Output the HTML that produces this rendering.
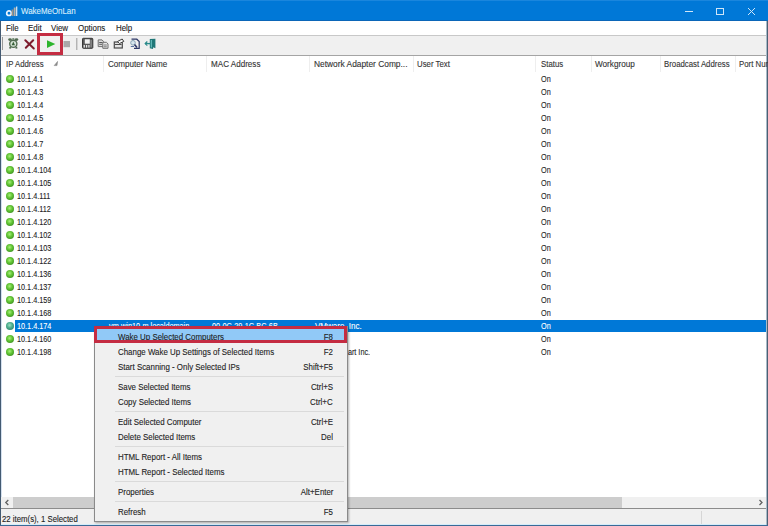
<!DOCTYPE html>
<html><head><meta charset="utf-8">
<style>
*{margin:0;padding:0;box-sizing:border-box}
html,body{width:768px;height:526px;overflow:hidden;background:#fff;font-family:"Liberation Sans",sans-serif;color:#1a1a1a}
.abs{position:absolute}
span{-webkit-text-stroke:0.12px currentColor}
#title{position:absolute;left:0;top:0;width:768px;height:21px;background:#0078d7;border-top:1px solid #1a86dd;border-bottom:1px solid #0b66b8}
#title .tt{position:absolute;left:20.5px;top:5.2px;font-size:8.6px;color:#d8ecfb;white-space:nowrap;transform-origin:0 0;transform:scaleX(.92)}
#bl{position:absolute;left:0;top:21px;width:1px;height:505px;background:#435a72}
#bl2{position:absolute;left:1px;top:56px;width:1px;height:441px;background:#d4e0ee}
#br{position:absolute;left:767px;top:21px;width:1px;height:505px;background:#4b6073}
#br2{position:absolute;left:766px;top:21px;width:1px;height:505px;background:#a9bac8}
#bb{position:absolute;left:0;top:525px;width:768px;height:1px;background:#3a6a96}
#bb2{position:absolute;left:1px;top:524px;width:765px;height:1px;background:#d4ecfa}
#menubar{position:absolute;left:1px;top:21px;width:765px;height:15px;background:#fff;border-bottom:1px solid #c8c8c8}
.mi{position:absolute;top:2px;font-size:9.3px;white-space:nowrap;transform-origin:0 0;transform:scaleX(.85)}
#toolbar{position:absolute;left:1px;top:36px;width:765px;height:20px;background:#f0f0f0;border-bottom:1px solid #a4a4a4}
#header{position:absolute;left:1px;top:56px;width:765px;height:17px;background:#fff}
.h{position:absolute;top:3px;font-size:9.3px;color:#333;white-space:nowrap;transform-origin:0 0;transform:scaleX(.84)}
.hs{position:absolute;top:0;width:1px;height:16px;background:#eeeeee}
.row{position:absolute;left:1px;width:765px;height:13px}
.row.sel{height:12px}
.selbg{position:absolute;left:14px;top:0;width:751px;height:12px;background:#0078d7}
.row .t{position:absolute;top:-0.5px;font-size:9.9px;white-space:nowrap;transform-origin:0 0;transform:scaleX(.735);color:#1e1e1e}
.row.sel .t{color:#fff}
.ball{position:absolute;left:5px;top:2px;width:8px;height:8px;border-radius:50%;background:radial-gradient(circle at 45% 40%,#a8ef7c 0,#62c534 40%,#2e7d1c 95%)}
.row.sel .ball{background:radial-gradient(circle at 45% 40%,#9fe0c0 0,#4fb08f 40%,#2a7a66 90%)}
#hscroll{position:absolute;left:1px;top:497px;width:765px;height:11px;background:#f0f0f0}
#thumb{position:absolute;left:12px;top:0;width:609px;height:11px;background:#cdcdcd}
#status{position:absolute;left:1px;top:508px;width:765px;height:16px;background:#f0f0f0;border-top:1px solid #8c8c8c}
#status .st{position:absolute;left:1px;top:4px;font-size:9.8px;white-space:nowrap;transform-origin:0 0;transform:scaleX(.795);color:#222}
#menu{position:absolute;left:94px;top:326px;width:254px;height:196px;background:#f0f0f0;border:1px solid #8a8a8a;box-shadow:1px 1px 2px rgba(0,0,0,.3)}
.ml{position:absolute;left:118px;font-size:9.3px;white-space:nowrap;transform-origin:0 0;transform:scaleX(.85);color:#1e1e1e}
.mr{position:absolute;right:435px;font-size:9.3px;white-space:nowrap;transform-origin:100% 0;transform:scaleX(.85);color:#1e1e1e}
#redmenu{position:absolute;left:94px;top:326px;width:253px;height:17px;border:3px solid #c42c42}
#redtool{position:absolute;left:37px;top:33px;width:26px;height:22px;border:3px solid #c42c42}
</style></head><body>
<div id="title">
  <svg class="abs" style="left:5px;top:4px" width="13" height="13" viewBox="0 0 13 13">
    <circle cx="4" cy="8.2" r="2.3" fill="none" stroke="#e8f4ff" stroke-width="1.7"/>
    <rect x="6.6" y="4.5" width="1.8" height="6.5" fill="#9a9288"/>
    <rect x="8.8" y="2.5" width="1.8" height="8.5" fill="#b8b0a4"/>
    <rect x="11.1" y="1.5" width="1.2" height="9.5" fill="#e4eef5"/>
  </svg>
  <span class="tt">WakeMeOnLan</span>
  <div class="abs" style="left:685px;top:10px;width:8px;height:1px;background:#cfe6f8"></div>
  <div class="abs" style="left:716px;top:7px;width:8px;height:7px;border:1px solid #cfe6f8"></div>
  <svg class="abs" style="left:747px;top:6px" width="9" height="9" viewBox="0 0 9 9"><path d="M1 1L8 8M8 1L1 8" stroke="#cfe6f8" stroke-width="1"/></svg>
</div>
<div id="bl"></div><div id="bl2"></div><div id="br"></div><div id="br2"></div><div id="bb"></div><div id="bb2"></div>
<div id="menubar">
  <span class="mi" style="left:5px">File</span>
  <span class="mi" style="left:27px">Edit</span>
  <span class="mi" style="left:50px">View</span>
  <span class="mi" style="left:77px">Options</span>
  <span class="mi" style="left:115px">Help</span>
</div>
<div id="toolbar"></div>
<svg class="abs" style="left:0;top:35px" width="160" height="20" viewBox="0 0 160 20">
  <rect x="2" y="2" width="1" height="13" fill="#9a9a9a"/>
  <g>
    <circle cx="13.3" cy="8.8" r="4.3" fill="#4f6a4f"/>
    <ellipse cx="10" cy="4.6" rx="1.8" ry="1.4" fill="#4f6a4f"/>
    <ellipse cx="16.5" cy="4.6" rx="1.8" ry="1.4" fill="#4f6a4f"/>
    <rect x="12.3" y="3.2" width="2" height="1.5" fill="#5d7a5d"/>
    <rect x="9.3" y="11.8" width="1.8" height="1.8" fill="#4f6a4f"/>
    <rect x="15.5" y="11.8" width="1.8" height="1.8" fill="#4f6a4f"/>
    <circle cx="13.3" cy="8.8" r="2.9" fill="#d6e4d6"/>
    <path d="M13.3 6.6L15 10.2H11.6Z" fill="#365f36"/>
  </g>
  <path d="M25.3 5.3L33.8 13.5M33.2 5.2L25.8 12.8" stroke="#7d1b2c" stroke-width="2" stroke-linecap="round"/>
  <path d="M47 5.2L55.3 9L47 13Z" fill="#2db52d"/>
  <rect x="63.5" y="6" width="6.5" height="6.2" fill="#a9a9a9"/>
  <rect x="76.3" y="3" width="1" height="12" fill="#9a9a9a"/>
  <rect x="82.5" y="3.3" width="10.3" height="10" rx="0.8" fill="#5a5a5a" stroke="#383838" stroke-width="1"/>
  <rect x="84.8" y="4.3" width="5" height="4.4" fill="#f4f4f4"/>
  <rect x="83.6" y="10" width="1.3" height="2.6" fill="#e8e8e8"/>
  <rect x="86" y="10" width="1.2" height="2.6" fill="#e8e8e8"/>
  <rect x="88.3" y="10" width="1.2" height="2.6" fill="#e8e8e8"/>
  <rect x="90.6" y="5" width="1" height="7.4" fill="#a0a0a0"/>
  <path d="M98.2 4.9H102L103.4 6.3V11.6H98.2Z" fill="#dcdcdc" stroke="#6e6e6e" stroke-width="1"/>
  <path d="M99.2 7.5H102.6M99.2 9.3H102" stroke="#5a5a5a" stroke-width="1"/>
  <path d="M102.8 7.3H106.4L108 8.9V13.3H102.8Z" fill="#e6e6e6" stroke="#6e6e6e" stroke-width="1"/>
  <path d="M103.8 10H106.8M103.8 11.8H106.8" stroke="#7a7a7a" stroke-width="1"/>
  <rect x="114.3" y="7" width="8" height="6" fill="#e2e2e2" stroke="#4a4a4a" stroke-width="1.2"/>
  <path d="M115 9.5H121.5" stroke="#4a4a4a" stroke-width="1"/>
  <path d="M117.5 6.5L122.2 4L123.8 6.4L119.5 8.5Z" fill="#f5f5f5" stroke="#3e3e3e" stroke-width="1"/>
  <path d="M131.5 4.2H136.8L139.2 6.5V13.4H134" fill="none" stroke="#2c3766" stroke-width="1.2"/>
  <circle cx="133" cy="7.8" r="2.3" fill="#d7e6ef" stroke="#8aa4b4" stroke-width="1"/>
  <path d="M134.5 9.5L137 12.6" stroke="#2c3766" stroke-width="1.6"/>
  <path d="M130.8 11.5H134" stroke="#5670a0" stroke-width="1"/>
  <path d="M149.8 4L155.4 3.8V13.2L153.2 12.2L153 14L149.8 13.2Z" fill="#1f7777"/>
  <path d="M145 8.6H150.5" stroke="#2a8a8a" stroke-width="1.4"/>
  <path d="M147.3 6.5L145.2 8.6L147.3 10.7" fill="none" stroke="#2a8a8a" stroke-width="1.2"/>
  <rect x="150.8" y="5" width="1" height="7.5" fill="#6fc6c6"/>
</svg>
<div id="header">
  <span class="h" style="left:5px">IP Address</span>
  <svg class="abs" style="left:51px;top:4px" width="8" height="8" viewBox="0 0 8 8"><path d="M5.6 1.4L2.2 5.6L5 5.6Z" fill="#8a8a8a" stroke="#8a8a8a" stroke-width="0.6"/></svg>
  <div class="hs" style="left:102px"></div>
  <span class="h" style="left:107px;transform:scaleX(.87)">Computer Name</span>
  <div class="hs" style="left:205px"></div>
  <span class="h" style="left:210px;transform:scaleX(.87)">MAC Address</span>
  <div class="hs" style="left:308px"></div>
  <span class="h" style="left:313px;transform:scaleX(.9)">Network Adapter Comp...</span>
  <div class="hs" style="left:412px"></div>
  <span class="h" style="left:416px">User Text</span>
  <div class="hs" style="left:534px"></div>
  <span class="h" style="left:540px">Status</span>
  <div class="hs" style="left:590px"></div>
  <span class="h" style="left:594px;transform:scaleX(.88)">Workgroup</span>
  <div class="hs" style="left:659px"></div>
  <span class="h" style="left:663px">Broadcast Address</span>
  <div class="hs" style="left:734px"></div>
  <span class="h" style="left:738px">Port Number</span>
</div>
<div class="row" style="top:73px"><i class="ball"></i><span class="t" style="left:16px">10.1.4.1</span><span class="t" style="left:540px">On</span></div>
<div class="row" style="top:86px"><i class="ball"></i><span class="t" style="left:16px">10.1.4.3</span><span class="t" style="left:540px">On</span></div>
<div class="row" style="top:99px"><i class="ball"></i><span class="t" style="left:16px">10.1.4.4</span><span class="t" style="left:540px">On</span></div>
<div class="row" style="top:112px"><i class="ball"></i><span class="t" style="left:16px">10.1.4.5</span><span class="t" style="left:540px">On</span></div>
<div class="row" style="top:125px"><i class="ball"></i><span class="t" style="left:16px">10.1.4.6</span><span class="t" style="left:540px">On</span></div>
<div class="row" style="top:138px"><i class="ball"></i><span class="t" style="left:16px">10.1.4.7</span><span class="t" style="left:540px">On</span></div>
<div class="row" style="top:151px"><i class="ball"></i><span class="t" style="left:16px">10.1.4.8</span><span class="t" style="left:540px">On</span></div>
<div class="row" style="top:164px"><i class="ball"></i><span class="t" style="left:16px">10.1.4.104</span><span class="t" style="left:540px">On</span></div>
<div class="row" style="top:177px"><i class="ball"></i><span class="t" style="left:16px">10.1.4.105</span><span class="t" style="left:540px">On</span></div>
<div class="row" style="top:190px"><i class="ball"></i><span class="t" style="left:16px">10.1.4.111</span><span class="t" style="left:540px">On</span></div>
<div class="row" style="top:203px"><i class="ball"></i><span class="t" style="left:16px">10.1.4.112</span><span class="t" style="left:540px">On</span></div>
<div class="row" style="top:216px"><i class="ball"></i><span class="t" style="left:16px">10.1.4.120</span><span class="t" style="left:540px">On</span></div>
<div class="row" style="top:229px"><i class="ball"></i><span class="t" style="left:16px">10.1.4.102</span><span class="t" style="left:540px">On</span></div>
<div class="row" style="top:242px"><i class="ball"></i><span class="t" style="left:16px">10.1.4.103</span><span class="t" style="left:540px">On</span></div>
<div class="row" style="top:255px"><i class="ball"></i><span class="t" style="left:16px">10.1.4.122</span><span class="t" style="left:540px">On</span></div>
<div class="row" style="top:268px"><i class="ball"></i><span class="t" style="left:16px">10.1.4.136</span><span class="t" style="left:540px">On</span></div>
<div class="row" style="top:281px"><i class="ball"></i><span class="t" style="left:16px">10.1.4.137</span><span class="t" style="left:540px">On</span></div>
<div class="row" style="top:294px"><i class="ball"></i><span class="t" style="left:16px">10.1.4.159</span><span class="t" style="left:540px">On</span></div>
<div class="row" style="top:307px"><i class="ball"></i><span class="t" style="left:16px">10.1.4.168</span><span class="t" style="left:540px">On</span></div>
<div class="row sel" style="top:320px"><i class="selbg"></i><i class="ball"></i><span class="t" style="left:16px">10.1.4.174</span><span class="t" style="left:108px">vm-win10-m.localdomain</span><span class="t" style="left:211px">00-0C-29-1C-BC-6B</span><span class="t" style="left:314px;transform:scaleX(.81)">VMware, Inc.</span><span class="t" style="left:540px">On</span></div>
<div class="row" style="top:333px"><i class="ball"></i><span class="t" style="left:16px">10.1.4.160</span><span class="t" style="left:540px">On</span></div>
<div class="row" style="top:346px"><i class="ball"></i><span class="t" style="left:16px">10.1.4.198</span><span class="t" style="left:336px">Smart Inc.</span><span class="t" style="left:540px">On</span></div>
<div id="hscroll"><div id="thumb"></div>
  <svg class="abs" style="left:0;top:0" width="12" height="11" viewBox="0 0 12 11"><path d="M7.3 3L4.8 5.5L7.3 8" fill="none" stroke="#606060" stroke-width="1.3"/></svg>
  <svg class="abs" style="left:753px;top:0" width="12" height="11" viewBox="0 0 12 11"><path d="M5.5 3L8 5.5L5.5 8" fill="none" stroke="#606060" stroke-width="1.3"/></svg>
</div>
<div id="status"><span class="st">22 item(s), 1 Selected</span>
  <div class="abs" style="left:700px;top:2px;width:1px;height:13px;background:#d6d6d6"></div>
</div>
<div id="menu"></div>
<div class="abs" style="left:95px;top:327px;width:251px;height:16px;background:#91c9f7"></div>
<span class="ml" style="top:332px">Wake Up Selected Computers</span><span class="mr" style="top:332px">F8</span>
<span class="ml" style="top:347px">Change Wake Up Settings of Selected Items</span><span class="mr" style="top:347px">F2</span>
<span class="ml" style="top:362px">Start Scanning - Only Selected IPs</span><span class="mr" style="top:362px">Shift+F5</span>
<span class="ml" style="top:382px">Save Selected Items</span><span class="mr" style="top:382px">Ctrl+S</span>
<span class="ml" style="top:397px">Copy Selected Items</span><span class="mr" style="top:397px">Ctrl+C</span>
<span class="ml" style="top:417px">Edit Selected Computer</span><span class="mr" style="top:417px">Ctrl+E</span>
<span class="ml" style="top:432px">Delete Selected Items</span><span class="mr" style="top:432px">Del</span>
<span class="ml" style="top:452px">HTML Report - All Items</span>
<span class="ml" style="top:467px">HTML Report - Selected Items</span>
<span class="ml" style="top:487px">Properties</span><span class="mr" style="top:487px">Alt+Enter</span>
<span class="ml" style="top:507px">Refresh</span><span class="mr" style="top:507px">F5</span>
<div class="abs" style="left:115px;top:376px;width:229px;height:1px;background:#dadada"></div>
<div class="abs" style="left:115px;top:411px;width:229px;height:1px;background:#dadada"></div>
<div class="abs" style="left:115px;top:446px;width:229px;height:1px;background:#dadada"></div>
<div class="abs" style="left:115px;top:481px;width:229px;height:1px;background:#dadada"></div>
<div class="abs" style="left:115px;top:501px;width:229px;height:1px;background:#dadada"></div>

<div id="redmenu"></div>
<div id="redtool"></div>
</body></html>
